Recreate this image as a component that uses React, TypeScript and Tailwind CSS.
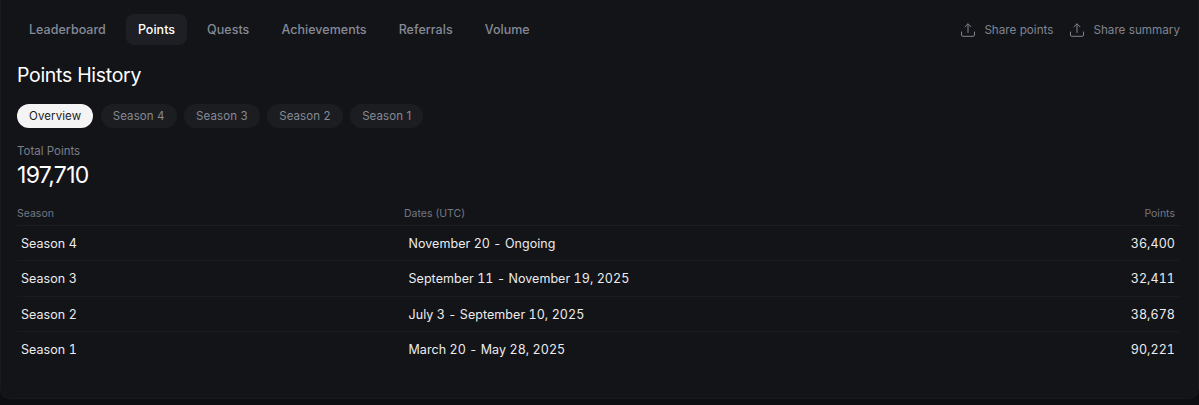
import React from "react";

const tabs = ["Leaderboard", "Points", "Quests", "Achievements", "Referrals", "Volume"];
const pills = ["Overview", "Season 4", "Season 3", "Season 2", "Season 1"];
const rows = [
  ["Season 4", "November 20 - Ongoing", "36,400"],
  ["Season 3", "September 11 - November 19, 2025", "32,411"],
  ["Season 2", "July 3 - September 10, 2025", "38,678"],
  ["Season 1", "March 20 - May 28, 2025", "90,221"],
];

function ShareIcon() {
  return (
    <svg width="16" height="16" viewBox="0 0 16 16" fill="none" stroke="currentColor" strokeWidth="1" strokeLinecap="round" strokeLinejoin="round">
      <path d="M8 10.5V2M5 4.8 8 1.8l3 3M1.5 10v3a1.3 1.3 0 0 0 1.3 1.3h10.4a1.3 1.3 0 0 0 1.3-1.3v-3" />
    </svg>
  );
}

export default function App() {
  return (
    <div className="h-[405px] w-[1199px] overflow-hidden bg-[#0d0e11] font-['Inter',sans-serif]">
      <div className="h-[399px] rounded-b-[10px] border-x border-b border-[#191a1e] bg-[#131418] pl-4 pr-[18px] pt-3.5">
        <div className="flex items-center justify-between">
          <div className="flex items-center gap-2">
            {tabs.map((t) => (
              <div
                key={t}
                className={`flex h-[31px] items-center rounded-lg px-3 pt-px text-[12.5px] font-medium tracking-[0.03px] ${
                  t === "Points" ? "bg-[#1e1f24] text-white" : "text-[#858a96]"
                }`}
              >
                {t}
              </div>
            ))}
          </div>
          <div className="flex items-center gap-4 pt-0.5 text-[11.7px] text-[#7f8490]">
            <div className="flex items-center gap-2"><ShareIcon /><span>Share points</span></div>
            <div className="flex items-center gap-2"><ShareIcon /><span>Share summary</span></div>
          </div>
        </div>
        <h1 className="mt-4 text-[19.5px] font-normal leading-[28px] tracking-[-0.3px] text-white">Points History</h1>
        <div className="mt-[15px] flex gap-[7.5px]">
          {pills.map((p) => (
            <div
              key={p}
              className={`flex h-6 items-center rounded-full px-3 pt-px text-[11.5px] tracking-[0.1px] ${
                p === "Overview" ? "bg-[#f4f4f5] text-[#1b1c20]" : "bg-[#1c1d21] text-[#858a96]"
              }`}
            >
              {p}
            </div>
          ))}
        </div>
        <div className="mt-[15px] text-[11.5px] leading-4 text-[#7a7f8b]">Total Points</div>
        <div className="mt-0.5 text-[23px] leading-7 tracking-[-0.7px] text-white">197,710</div>
        <div className="mt-[14px] flex h-[23px] items-start border-b border-[#1c1d21] pt-[3px] text-[10.5px] leading-4 text-[#747884]">
          <div className="w-[387px]">Season</div>
          <div className="flex-1">Dates (UTC)</div>
          <div className="pr-[5px]">Points</div>
        </div>
        {rows.map((r) => (
          <div key={r[0]} className="flex h-[35.4px] items-center border-b border-[#1a1b1f] pl-1 pr-[5px] pt-0.5 text-[12.5px] tracking-[0.05px] tabular-nums text-[#ececee] last:border-b-0">
            <div className="w-[387.5px]">{r[0]}</div>
            <div className="flex-1">{r[1]}</div>
            <div>{r[2]}</div>
          </div>
        ))}
      </div>
    </div>
  );
}
